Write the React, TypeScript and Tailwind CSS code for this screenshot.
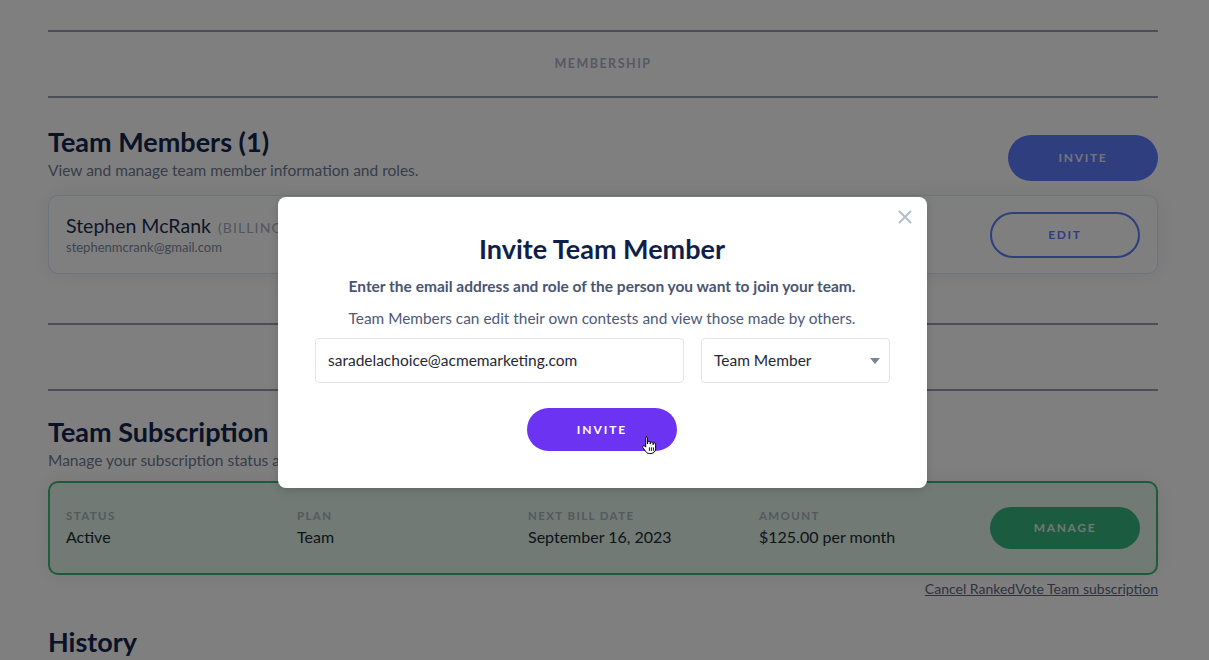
import React from "react";

const font = { fontFamily: "Lato, 'Noto Sans', sans-serif" };

function HandCursor() {
  return (
    <svg width="16" height="20" viewBox="0 0 16 20" className="absolute left-[114px] top-[27px]">
      <path
        d="M5 1.5c.8 0 1.4.6 1.4 1.4V9h.2V7.6c0-.8.6-1.3 1.3-1.3s1.3.5 1.3 1.3V9h.2V8.3c0-.8.6-1.3 1.3-1.3s1.3.5 1.3 1.3V9.6h.2V9.1c0-.7.5-1.2 1.2-1.2s1.2.5 1.2 1.2v4.6c0 2.6-1.8 4.8-4.5 4.8H8.3c-1.6 0-2.7-.7-3.6-2L2 12.7c-.5-.6-.4-1.4.2-1.8.6-.4 1.3-.3 1.7.2l.8 1V2.9c0-.8.5-1.4 1.3-1.4z"
        fill="#fff"
        stroke="#000"
        strokeWidth="1"
        strokeLinejoin="round"
      />
      <path d="M8.4 12.3v3.6M10.4 12.3v3.6M12.4 12.3v3.6" stroke="#000" strokeWidth="0.9" />
    </svg>
  );
}

export default function App() {
  return (
    <div className="relative min-h-[660px] h-[660px] overflow-hidden bg-white" style={font}>
      <div className="mx-[48px] w-[1110px]">
        <div className="h-[30px]" />
        <div className="border-y-2 border-[#959db1] h-[68px] flex items-center justify-center">
          <span className="text-[12.5px] font-bold tracking-[0.12em] text-[#aab2c6]">MEMBERSHIP</span>
        </div>

        <div className="mt-[28px] flex justify-between items-start">
          <div>
            <h2 className="text-[27px] leading-[32px] font-bold text-[#15254f]">Team Members (1)</h2>
            <p className="text-[15.5px] leading-[22px] text-[#6f7a94] mt-[1px]">View and manage team member information and roles.</p>
          </div>
          <button className="mt-[9px] w-[150px] h-[46px] rounded-full bg-[#5c7cfc] text-[12px] font-bold tracking-[0.14em] text-[#e6e9f8]">
            INVITE
          </button>
        </div>

        <div className="mt-[14px] h-[79px] rounded-[10px] border border-[#dde6fb] bg-white shadow-[0_0_24px_rgba(0,0,0,0.07)] flex items-center justify-between pl-[17px] pr-[17px]">
          <div>
            <div className="flex items-baseline gap-[7px]">
              <span className="text-[19.5px] leading-[24px] text-[#1e2b52]">Stephen McRank</span>
              <span className="text-[14px] tracking-[0.08em] text-[#a5adc2]">(BILLING ADMIN)</span>
            </div>
            <div className="text-[13px] leading-[18px] text-[#7f889f]">stephenmcrank@gmail.com</div>
          </div>
          <button className="w-[150px] h-[46px] rounded-full border-2 border-[#5c7cfc] text-[12px] font-bold tracking-[0.14em] text-[#5c7cfc]">
            EDIT
          </button>
        </div>

        <div className="mt-[49px] border-y-2 border-[#959db1] h-[68px]" />

        <div className="mt-[25px]">
          <h2 className="text-[27px] leading-[32px] font-bold text-[#15254f]">Team Subscription</h2>
          <p className="text-[15.5px] leading-[22px] text-[#6f7a94] mt-[1px]">Manage your subscription status and billing information.</p>
        </div>

        <div className="mt-[10px] h-[94px] rounded-[10px] border-2 border-[#3cb478] bg-[#e2f4e8] shadow-[0_0_24px_rgba(0,0,0,0.07)] flex items-center pl-[16px] pr-[16px]">
          <div className="grid grid-cols-4 flex-1">
            {[
              ["STATUS", "Active"],
              ["PLAN", "Team"],
              ["NEXT BILL DATE", "September 16, 2023"],
              ["AMOUNT", "$125.00 per month"],
            ].map(([l, v]) => (
              <div key={l} className="w-[231px]">
                <div className="text-[11.5px] font-bold tracking-[0.12em] text-[#a9b2bf] leading-[16px]">{l}</div>
                <div className="text-[16px] leading-[24px] text-[#202a36] mt-[1px]">{v}</div>
              </div>
            ))}
          </div>
          <button className="w-[150px] h-[42px] rounded-full bg-[#36b680] text-[12px] font-bold tracking-[0.14em] text-[#e0efe6]">
            MANAGE
          </button>
        </div>

        <div className="flex justify-end mt-[5px]">
          <a className="text-[14px] leading-[18px] underline text-[#5f6780]">Cancel RankedVote Team subscription</a>
        </div>

        <h2 className="mt-[28px] text-[27px] leading-[32px] font-bold text-[#15254f]">History</h2>
      </div>

      <div className="absolute inset-0 bg-black/50 flex items-start justify-center">
        <div className="relative mt-[197px] ml-[-5px] w-[649px] h-[291px] bg-white rounded-[8px] shadow-[0_2px_8px_rgba(0,0,0,0.15)] flex flex-col items-center">
          <button className="absolute right-[14px] top-[12px] text-[#b5bccb]">
            <svg width="16" height="16" viewBox="0 0 16 16">
              <path d="M2.5 2.5l11 11M13.5 2.5l-11 11" stroke="currentColor" strokeWidth="2" strokeLinecap="round" />
            </svg>
          </button>
          <h1 className="mt-[35px] text-[27px] leading-[34px] font-bold text-[#0f1f4a]">Invite Team Member</h1>
          <p className="mt-[10px] text-[15.5px] leading-[20px] font-bold text-[#4a5573]">
            Enter the email address and role of the person you want to join your team.
          </p>
          <p className="mt-[12px] text-[15.4px] leading-[20px] text-[#4d5977]">
            Team Members can edit their own contests and view those made by others.
          </p>
          <div className="mt-[10px] flex gap-[17px] w-[575px] ml-[1px]">
            <div className="w-[369px] h-[45px] rounded-[4px] border border-[#e1e4ec] flex items-center px-[12px] text-[15.5px] text-[#1f2836]">
              saradelachoice@acmemarketing.com
            </div>
            <div className="w-[189px] h-[45px] rounded-[4px] border border-[#e1e4ec] flex items-center justify-between pl-[12px] pr-[9px] text-[15.5px] text-[#1f2836]">
              <span>Team Member</span>
              <svg width="10" height="6" viewBox="0 0 10 6">
                <path d="M0 0h10L5 6z" fill="#7c8394" />
              </svg>
            </div>
          </div>
          <div className="relative mt-[25px]">
            <button className="w-[150px] h-[43px] rounded-full bg-[#6c33f2] text-[12px] font-bold tracking-[0.16em] text-white">
              INVITE
            </button>
            <HandCursor />
          </div>
        </div>
      </div>
    </div>
  );
}
